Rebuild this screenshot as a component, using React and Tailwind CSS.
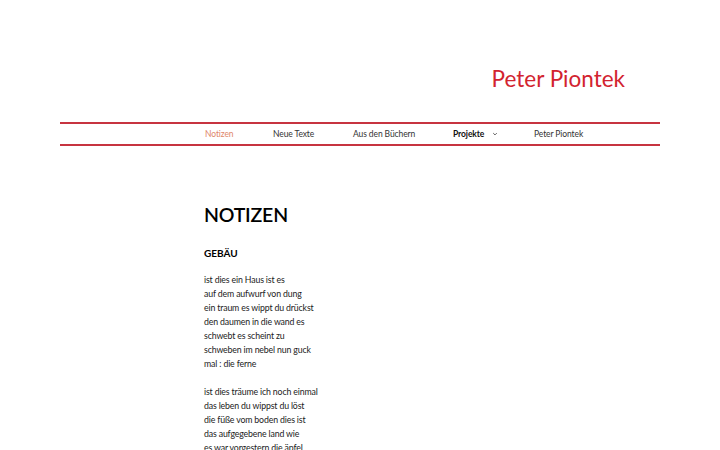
export default function App() {
  const stanza1 = [
    "ist dies ein Haus ist es",
    "auf dem aufwurf von dung",
    "ein traum es wippt du drückst",
    "den daumen in die wand es",
    "schwebt es scheint zu",
    "schweben im nebel nun guck",
    "mal : die ferne",
  ];
  const stanza2 = [
    "ist dies träume ich noch einmal",
    "das leben du wippst du löst",
    "die füße vom boden dies ist",
    "das aufgegebene land wie",
    "es war vorgestern die äpfel",
    "fallen vom baum",
  ];

  return (
    <div className="h-[450px] overflow-hidden bg-white font-['Lato',sans-serif]">
      <div className="mx-auto w-[600px]">
        <header className="flex h-[122px] justify-end pr-[35px] pt-[64px]">
          <h1 className="text-[22.5px] leading-[30px] text-[#d2232f]">Peter Piontek</h1>
        </header>

        <nav className="flex h-[24px] items-center border-y-2 border-[#c73440] pl-[145px] text-[8.5px] tracking-[-0.1px] text-[#333]">
          <a className="w-[68px] text-[#e0876a]">Notizen</a>
          <a className="w-[80px]">Neue Texte</a>
          <a className="w-[100px]">Aus den Büchern</a>
          <a className="flex w-[81px] items-center font-bold text-[#111]">
            Projekte
            <svg className="ml-[8px] h-[6px] w-[6px]" viewBox="0 0 10 10" fill="none" stroke="#444" strokeWidth="1.4">
              <path d="M2 3.5l3 3 3-3" />
            </svg>
          </a>
          <a>Peter Piontek</a>
        </nav>

        <main className="pl-[144px] pt-[57px] text-[#222]">
          <h2 className="text-[19.5px] font-semibold leading-[24px] tracking-[-0.2px] text-black">NOTIZEN</h2>
          <h3 className="mt-[19px] text-[10px] font-bold leading-[14px] text-black">GEBÄU</h3>
          <div className="mt-[13px] text-[8.75px] leading-[14px] tracking-[-0.15px]">
            {stanza1.map((l) => (
              <p key={l}>{l}</p>
            ))}
            <div className="h-[14px]" />
            {stanza2.map((l) => (
              <p key={l}>{l}</p>
            ))}
          </div>
        </main>
      </div>
    </div>
  );
}
